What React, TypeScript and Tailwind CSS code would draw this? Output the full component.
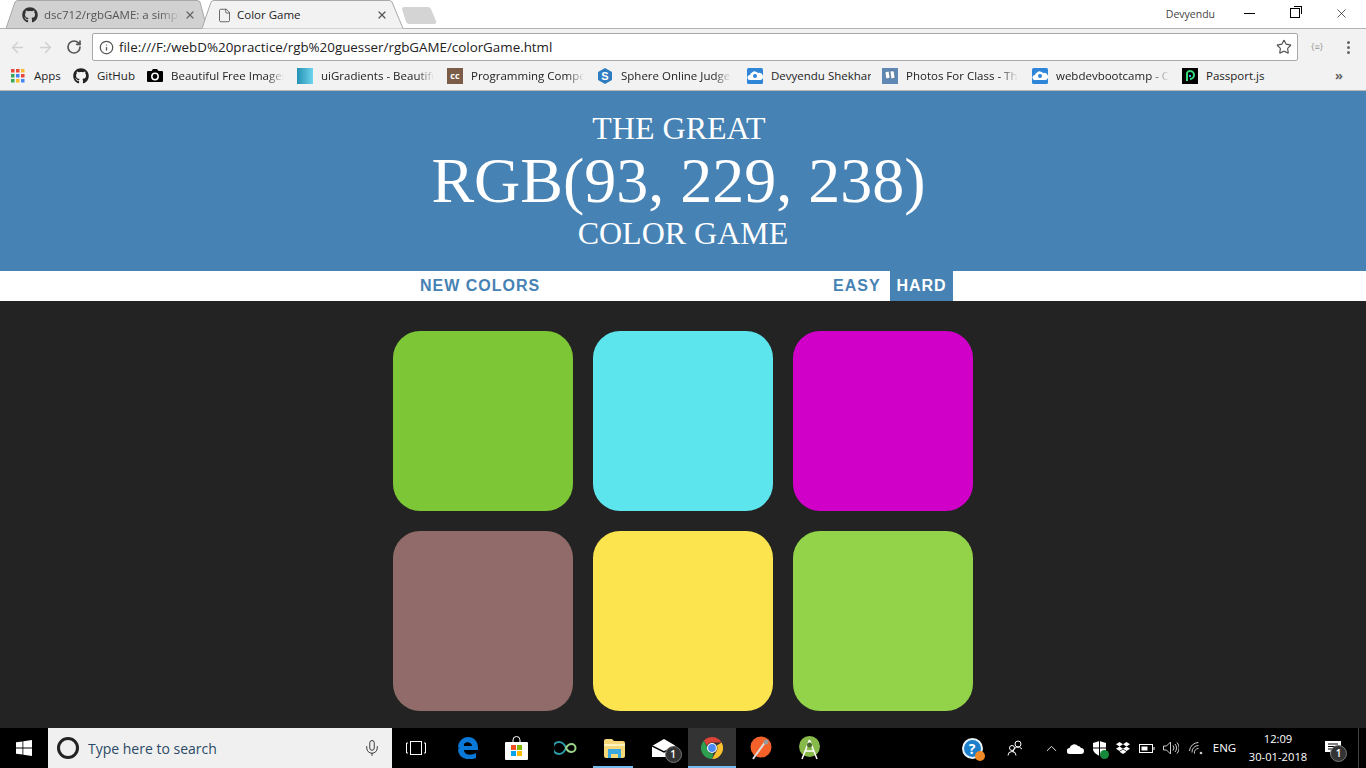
import { FC, ReactNode } from 'react';
import { FaGithub, FaDropbox } from 'react-icons/fa';
import { Info, RotateCw, ArrowLeft, ArrowRight, Star, Mic, ChevronUp, File, X } from 'lucide-react';

const squares = ['#7dc737', '#5de5ee', '#d000c8', '#916a6a', '#fbe44e', '#92d34a'];

const Tile: FC<{ w: string; children: ReactNode }> = ({ w, children }) => (
  <div className={`${w} h-full flex items-center justify-center shrink-0`}>{children}</div>
);

const Badge = ({ n }: { n: number }) => (
  <span className="absolute -right-[6px] -bottom-[6px] w-[17px] h-[17px] rounded-full bg-[#333] border border-[#777] text-white text-[10px] leading-[15px] text-center font-semibold">
    {n}
  </span>
);

const AppsIcon = () => (
  <svg width="16" height="16" viewBox="0 0 16 16">
    {[1, 6, 11].map((y, r) =>
      [1, 6, 11].map((x, c) => (
        <rect
          key={`${r}-${c}`}
          x={x}
          y={y}
          width="3.5"
          height="3.5"
          fill={[['#e8453c', '#e8453c', '#f9bb2d'], ['#3aa757', '#4285f4', '#e8453c'], ['#3aa757', '#f9bb2d', '#4285f4']][r][c]}
        />
      ))
    )}
  </svg>
);

const CameraIcon = () => (
  <svg width="16" height="16" viewBox="0 0 16 16">
    <path d="M1 3h3.5L6 1h4l1.500 2H15a1 1 0 0 1 1 1v9a1 1 0 0 1-1 1H1a1 1 0 0 1-1-1V4a1 1 0 0 1 1-1z" fill="#000" />
    <circle cx="8" cy="8.500" r="3.200" fill="none" stroke="#fff" strokeWidth="1.500" />
  </svg>
);

const CloudTile = () => (
  <svg width="16" height="16" viewBox="0 0 16 16">
    <rect width="16" height="16" rx="1.500" fill="#2f86d8" />
    <path d="M3 12a2.500 2.500 0 0 1 0-5 3 3 0 0 1 2-2.500 4 4 0 0 1 6 .5 3.200 3.200 0 0 1 2.500 7z" fill="#fff" />
    <circle cx="8" cy="8" r="2" fill="#2f86d8" />
  </svg>
);

const bookmarks: { icon: ReactNode; label: string; w: string; fade?: boolean; gap: string }[] = [
  { icon: <AppsIcon />, label: 'Apps', w: 'w-[27px]', gap: 'ml-0' },
  { icon: <FaGithub size={16} />, label: 'GitHub', w: 'w-[38px]', gap: 'ml-[12px]' },
  { icon: <CameraIcon />, label: 'Beautiful Free Images', w: 'w-[113px]', fade: true, gap: 'ml-[12px]' },
  {
    icon: <span className="block w-[16px] h-[16px] bg-gradient-to-r from-[#2191b5] to-[#6dd5ed]" />,
    label: 'uiGradients - Beautiful',
    w: 'w-[113px]',
    fade: true,
    gap: 'ml-[13px]',
  },
  {
    icon: (
      <span className="block w-[16px] h-[16px] bg-[#7a5c48] text-white text-[9px] leading-[16px] text-center font-bold">cc</span>
    ),
    label: 'Programming Competition',
    w: 'w-[113px]',
    fade: true,
    gap: 'ml-[13px]',
  },
  {
    icon: (
      <svg width="16" height="16" viewBox="0 0 16 16">
        <path d="M8 0l7 4v8l-7 4-7-4V4z" fill="#2f7cc1" />
        <text x="8" y="12" textAnchor="middle" fontSize="11" fontWeight="700" fill="#fff" fontFamily="Liberation Sans, sans-serif">S</text>
      </svg>
    ),
    label: 'Sphere Online Judge',
    w: 'w-[110px]',
    fade: true,
    gap: 'ml-[13px]',
  },
  { icon: <CloudTile />, label: 'Devyendu Shekhar', w: 'w-[100px]', gap: 'ml-[16px]' },
  {
    icon: (
      <svg width="16" height="16" viewBox="0 0 16 16">
        <rect width="16" height="16" fill="#5f88b5" />
        <path d="M3 4l4-1 1 7-4 1zM8 3l4 0 1 7-4 1z" fill="#fff" stroke="#35567a" strokeWidth=".5" />
      </svg>
    ),
    label: 'Photos For Class - The',
    w: 'w-[112px]',
    fade: true,
    gap: 'ml-[11px]',
  },
  { icon: <CloudTile />, label: 'webdevbootcamp - Colt', w: 'w-[113px]', fade: true, gap: 'ml-[14px]' },
  {
    icon: (
      <svg width="16" height="16" viewBox="0 0 16 16">
        <rect width="16" height="16" fill="#000" />
        <path d="M5 13V5a3 3 0 0 1 3-2 4 4 0 0 1 0 8" fill="none" stroke="#35df79" strokeWidth="2" />
        <path d="M8 9V7" stroke="#2fa8f0" strokeWidth="2" />
      </svg>
    ),
    label: 'Passport.js',
    w: 'w-[60px]',
    gap: 'ml-[13px]',
  },
];

const BrowserChrome = () => (
  <div className="shrink-0 font-['Open_Sans',sans-serif] text-[#222]">
    <div className="relative h-[29px] bg-white flex border-b border-[#b4b4b4] text-[11.500px]">
      <svg className="absolute left-0 top-0" width="440" height="29" viewBox="0 0 440 29">
        <path d="M6 28.500L15 2Q16 .5 18 .5H197Q199 .5 200 2L207 28.500Z" fill="#d1d1d1" stroke="#a8a8a8" />
        <path d="M202 28.500L211 2Q212 .5 214 .5H389Q391 .5 392 2L403 28.500" fill="#f2f2f2" stroke="#a8a8a8" />
        <path d="M402 9Q402 7 404 7H428Q430 7 431 9L436 21Q437 24 434 24H409Q407 24 406 22Z" fill="#d4d4d4" />
      </svg>
      <div className="relative w-[203px] h-full flex items-center pl-[22px] pt-[2px] text-[#555]">
        <FaGithub size={16} className="text-[#333] shrink-0" />
        <span className="ml-[6px] w-[136px] whitespace-nowrap overflow-hidden [mask-image:linear-gradient(to_right,#000_85%,transparent)]">
          dsc712/rgbGAME: a simple game
        </span>
        <X size={12} strokeWidth={2.500} className="ml-[4px] text-[#666]" />
      </div>
      <div className="relative w-[200px] h-full flex items-center pl-[14px] pt-[2px]">
        <File size={15} strokeWidth={1.250} className="text-[#444] shrink-0" />
        <span className="ml-[5px] w-[139px] whitespace-nowrap">Color Game</span>
        <X size={12} strokeWidth={2.500} className="text-[#555]" />
      </div>
      <div className="flex-1" />
      <span className="text-[10.500px] self-start mt-[7px] mr-[29px] text-[#444] [text-shadow:0_0_2px_#fff]">Devyendu</span>
      <div className="flex h-[26px] items-center">
        <span className="w-[11px] h-px bg-black mr-[35px]" />
        <span className="relative w-[10px] h-[10px] mr-[34px] border border-black">
          <span className="absolute -top-[3px] -right-[3px] w-[8px] h-[8px] border-t border-r border-black" />
        </span>
        <X size={15} strokeWidth={1} className="text-black mr-[17px]" />
      </div>
    </div>
    <div className="h-[33px] bg-[#f2f2f2] flex items-center pt-[4px] pb-[1px]">
      <ArrowLeft size={17} className="ml-[9px] text-[#d0d0d0]" />
      <ArrowRight size={17} className="ml-[11px] text-[#d0d0d0]" />
      <RotateCw size={16} strokeWidth={2.500} className="ml-[12px] text-[#555]" />
      <div className="ml-[10px] w-[1206px] h-[28px] bg-white border border-[#a9a9a9] rounded-[2px] flex items-center pl-[6px] pr-[5px]">
        <Info size={15} className="text-[#555]" />
        <span className="ml-[5px] text-[13.370px] text-[#222] flex-1">file:///F:/webD%20practice/rgb%20guesser/rgbGAME/colorGame.html</span>
        <Star size={16} strokeWidth={1.750} className="text-[#555]" />
      </div>
      <span className="ml-[13px] text-[9px] text-[#999]">{'{≡}'}</span>
      <div className="ml-[24px] flex flex-col gap-[2px]">
        <span className="w-[3px] h-[3px] rounded-full bg-[#666]" />
        <span className="w-[3px] h-[3px] rounded-full bg-[#666]" />
        <span className="w-[3px] h-[3px] rounded-full bg-[#666]" />
      </div>
    </div>
    <div className="h-[29px] bg-[#f2f2f2] border-b border-[#b8b8b8] flex items-center pl-[10px]">
      {bookmarks.map((b) => (
        <div key={b.label} className={`flex items-center gap-[8px] shrink-0 ${b.gap}`}>
          <span className="w-[16px] flex justify-center">{b.icon}</span>
          <span
            className={`${b.w} whitespace-nowrap overflow-hidden text-[11.500px] ${
              b.fade ? '[mask-image:linear-gradient(to_right,#000_85%,transparent)]' : ''
            }`}
          >
            {b.label}
          </span>
        </div>
      ))}
      <span className="ml-[69px] text-[13px] font-bold text-[#666]">»</span>
    </div>
  </div>
);

const ChromeLogo = () => (
  <svg width="22" height="22" viewBox="0 0 22 22">
    <path d="M11 0a11 11 0 0 1 9.530 5.500H11a5.500 5.500 0 0 0-5 3.200L2.800 3.700A11 11 0 0 1 11 0z" fill="#db4437" />
    <path d="M20.530 5.500A11 11 0 0 1 11 22l4.600-8a5.500 5.500 0 0 0 .2-5.500z" fill="#fbc02d" />
    <path d="M11 22A11 11 0 0 1 2.800 3.700L6.500 11a5 5 0 0 0 6 5.300L11 22z" fill="#2e9e50" />
    <circle cx="11" cy="11" r="5" fill="#fff" />
    <circle cx="11" cy="11" r="3.900" fill="#4c8bf5" />
  </svg>
);

const Taskbar = () => (
  <div className="h-[40px] shrink-0 bg-black flex items-stretch font-['Open_Sans',sans-serif] text-white">
    <Tile w="w-[48px]">
      <svg width="16" height="16" viewBox="0 0 16 16" fill="#fff">
        <path d="M0 2.300l6.500-.9v6.200H0zM7.300 1.300L16 0v7.600H7.300zM0 8.400h6.500v6.200L0 13.700zM7.300 8.400H16V16l-8.700-1.300z" />
      </svg>
    </Tile>
    <div className="w-[344px] bg-[#f0f0f0] flex items-center pl-[9px] pr-[11px] text-[#333]">
      <span className="w-[22px] h-[22px] rounded-full border-[3px] border-[#222] shrink-0" />
      <span className="ml-[9px] text-[14px] flex-1 text-[#2a4a66]">Type here to search</span>
      <Mic size={18} strokeWidth={1.250} className="text-[#333]" />
    </div>
    <Tile w="w-[51px] pr-[3px]">
      <svg width="20" height="14" viewBox="0 0 20 14" fill="none" stroke="#fff">
        <rect x="4.500" y=".5" width="11" height="13" />
        <path d="M2 2H.5v10H2M18 2h1.500v10H18" />
      </svg>
    </Tile>
    <Tile w="w-[49px]">
      <svg width="21" height="22" viewBox="0 0 21 22">
        <path d="M1 11C1 4 6 0 11 0c6 0 10 4 10 11v2H7c0 5 7 6 12 3v5c-7 3-17 1-18-8 1-3 3-5 6-7 0 1 0 2 0 3h8c0-4-6-5-8-2" fill="#0a78d7" />
      </svg>
    </Tile>
    <Tile w="w-[49px]">
      <svg width="23" height="24" viewBox="0 0 23 24">
        <path d="M8 6V4a3.500 3.500 0 0 1 7 0v2" fill="none" stroke="#fff" />
        <rect y="6" width="23" height="18" rx="1" fill="#fff" />
        <rect x="6" y="9" width="5" height="5" fill="#f25022" />
        <rect x="12" y="9" width="5" height="5" fill="#7fba00" />
        <rect x="6" y="15" width="5" height="5" fill="#00a4ef" />
        <rect x="12" y="15" width="5" height="5" fill="#ffb900" />
      </svg>
    </Tile>
    <Tile w="w-[49px]">
      <svg width="24" height="14" viewBox="0 0 24 14" fill="none" strokeWidth="2">
        <path d="M12 7C10 2 7 1 5 1a6 6 0 0 0 0 12c2 0 5-1 7-6z" stroke="#2c9aa8" />
        <path d="M12 7c1.500-3 3-4 5.500-4a4 4 0 0 1 0 8C15 11 13.500 10 12 7z" stroke="#9ad38a" />
      </svg>
    </Tile>
    <div className="relative w-[49px] flex items-center justify-center">
      <svg width="21" height="19" viewBox="0 0 21 19">
        <path d="M0 2a2 2 0 0 1 2-2h6l2 2h9a2 2 0 0 1 2 2v13a2 2 0 0 1-2 2H2a2 2 0 0 1-2-2z" fill="#f6d878" />
        <rect x="0" y="5" width="21" height="2" fill="#fff3c4" />
        <path d="M4 10h13v9h-3v-4H7v4H4z" fill="#3aa7e0" />
      </svg>
      <span className="absolute left-[3px] right-[6px] bottom-0 h-[2px] bg-[#76b9ed]" />
    </div>
    <Tile w="w-[49px]">
      <span className="relative">
        <svg width="24" height="18" viewBox="0 0 24 18" className="block">
          <path d="M0 7L12 0l12 7v11H0z" fill="#fff" />
          <path d="M0 7l12 6 12-6" fill="none" stroke="#000" strokeWidth="1.500" />
        </svg>
        <Badge n={1} />
      </span>
    </Tile>
    <div className="relative w-[48px] bg-[#333] flex items-center justify-center">
      <ChromeLogo />
      <span className="absolute left-0 right-0 bottom-0 h-[2px] bg-[#76b9ed]" />
    </div>
    <Tile w="w-[49px]">
      <svg width="22" height="24" viewBox="0 0 22 24">
        <circle cx="11" cy="11" r="10.500" fill="#f4622a" />
        <path d="M16 5L5 20l-2 3" stroke="#ddd" strokeWidth="2" fill="none" />
        <circle cx="16" cy="6" r="2.500" fill="#999" />
      </svg>
    </Tile>
    <Tile w="w-[49px]">
      <svg width="21" height="24" viewBox="0 0 21 24">
        <circle cx="10.500" cy="10.500" r="10.500" fill="#86b84a" />
        <path d="M10.500 4L3 23M10.500 4l7.500 19M6 15h9" stroke="#fff" strokeWidth="1.500" fill="none" />
        <circle cx="10.500" cy="9" r="2.500" fill="#47622c" />
      </svg>
    </Tile>
    <div className="flex-1" />
    <Tile w="w-[48px]">
      <span className="relative w-[21px] h-[21px] rounded-full bg-[#1b7fcc] border-2 border-[#e8f3fb] text-white text-[14px] leading-[17px] font-bold text-center">
        ?
        <span className="absolute -right-[4px] -bottom-[4px] w-[10px] h-[10px] rounded-full bg-[#f08a28]" />
      </span>
    </Tile>
    <Tile w="w-[38px]">
      <svg width="16" height="16" viewBox="0 0 16 16" fill="none" stroke="#fff">
        <circle cx="11" cy="4" r="3" />
        <path d="M6 12a5 5 0 0 1 9-3" />
        <circle cx="5" cy="8" r="2.500" />
        <path d="M1 15.500a4 4 0 0 1 8 0" />
      </svg>
    </Tile>
    <div className="w-[5px] shrink-0" />
    <Tile w="w-[24px]">
      <ChevronUp size={17} strokeWidth={1.250} />
    </Tile>
    <Tile w="w-[24px]">
      <svg width="17" height="11" viewBox="0 0 17 11" fill="#fff">
        <path d="M3 11a3 3 0 0 1-.5-6A5 5 0 0 1 11 3a3.500 3.500 0 0 1 3 2 3 3 0 0 1 0 6z" />
      </svg>
    </Tile>
    <Tile w="w-[24px]">
      <span className="relative">
        <svg width="13" height="15" viewBox="0 0 13 15" fill="#fff" className="block">
          <path d="M0 2l6.500-2L13 2v6c0 3-3 5-6.500 7C3 13 0 11 0 8z" />
          <path d="M6.500 0v15M0 7h13" stroke="#000" />
        </svg>
        <span className="absolute -right-[3px] -bottom-[3px] w-[9px] h-[9px] rounded-full bg-[#17893a]" />
      </span>
    </Tile>
    <Tile w="w-[24px]">
      <FaDropbox size={14} />
    </Tile>
    <Tile w="w-[24px]">
      <svg width="16" height="9" viewBox="0 0 16 9" fill="none" stroke="#fff">
        <rect x=".5" y=".5" width="13" height="8" />
        <rect x="2.500" y="2.500" width="6" height="4" fill="#fff" stroke="none" />
        <path d="M15 3v3" />
      </svg>
    </Tile>
    <Tile w="w-[24px]">
      <svg width="16" height="14" viewBox="0 0 16 14" fill="none" stroke="#ccc">
        <path d="M.5 5h3l4-4v12l-4-4h-3z" />
        <path d="M10 4.500a4 4 0 0 1 0 5M12 3a6 6 0 0 1 0 8M14 1.500a8 8 0 0 1 0 11" />
      </svg>
    </Tile>
    <Tile w="w-[25px]">
      <svg width="14" height="13" viewBox="0 0 14 13" fill="none" stroke="#ccc">
        <path d="M.5 9a9 9 0 0 1 9-8.500M3 10.500a6.500 6.500 0 0 1 6.500-7M5.500 11.500a4 4 0 0 1 4-5" />
        <circle cx="12" cy="11" r="1.300" fill="#ccc" stroke="none" />
      </svg>
    </Tile>
    <Tile w="w-[33px]">
      <span className="text-[11.500px]">ENG</span>
    </Tile>
    <div className="w-[74px] shrink-0 flex flex-col items-center justify-center text-[11.200px] leading-[18px]">
      <span>12:09</span>
      <span>30-01-2018</span>
    </div>
    <Tile w="w-[36px]">
      <span className="relative">
        <svg width="16" height="15" viewBox="0 0 16 15" className="block">
          <path d="M0 0h16v11H8l-3 3v-3H0z" fill="#fff" />
          <path d="M3 3h10M3 5.500h10M3 8h10" stroke="#000" />
        </svg>
        <Badge n={1} />
      </span>
    </Tile>
    <div className="w-[15px] shrink-0 pr-[7px]">
      <div className="h-full border-r border-[#444]" />
    </div>
  </div>
);

export default function App() {
  return (
    <div className="h-screen w-full overflow-hidden flex flex-col bg-[#232323]">
      <BrowserChrome />
      <div className="flex-1 min-h-0 overflow-hidden flex flex-col">
        <h1 className="h-[180px] shrink-0 bg-[#4682b4] text-white font-['Liberation_Serif',serif] font-normal flex flex-col items-center pt-[19px]">
          <span className="text-[32px] leading-[36px] pr-[8px]">THE GREAT</span>
          <span className="text-[64px] leading-[74px] -mt-[2px] pr-[9px]">RGB(93, 229, 238)</span>
          <span className="text-[32px] leading-[36px] -mt-[3px]">COLOR GAME</span>
        </h1>
        <div className="h-[30px] shrink-0 bg-white text-[#4682b4] font-['Liberation_Sans',sans-serif] font-bold text-[16px] tracking-[1px] flex items-stretch pl-[420px]">
          <span className="leading-[29px] w-[413px]">NEW COLORS</span>
          <span className="leading-[29px] w-[57px]">EASY</span>
          <span className="leading-[29px] w-[63px] bg-[#4682b4] text-white text-center">HARD</span>
        </div>
        <div className="w-[600px] mx-auto grid grid-cols-3 gap-[20px] px-[10px] pt-[30px]">
          {squares.map((c) => (
            <div key={c} className="h-[180px] rounded-[27px]" style={{ backgroundColor: c }} />
          ))}
        </div>
      </div>
      <Taskbar />
    </div>
  );
}
